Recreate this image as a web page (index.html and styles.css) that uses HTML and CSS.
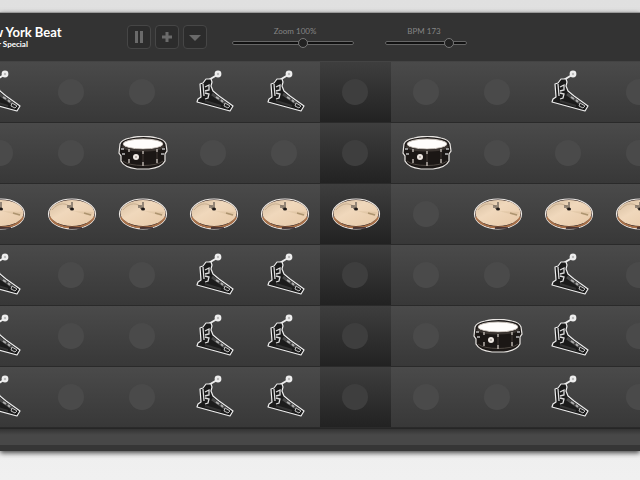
FILE: index.html
```
<!DOCTYPE html>
<html lang="en">
<head>
    <meta charset="UTF-8">
    <title>New York Beat</title>
    <link rel="stylesheet" href="styles.css">
</head>

<body>

<svg class="sprites" aria-hidden="true">
    <symbol id="kick" viewBox="-1 1 48 52">
        <path d="M16 16 L26 10" stroke="#eee" stroke-width="2" fill="none"/>
        <path d="M9 19 L12 18 L15 14 L20 14 L21 17 L20 21 L22 26 L28 31 L42 41 L39 46 L6 37 L7 34 L10 32 Z" fill="#1b1b1b" stroke="#eee" stroke-width="1.2" stroke-linejoin="round"/>
        <path d="M12 19 L13 31 M14 22 L18 20 L18 25 L14 26 M14 28 L18 29 L17 33 L14 34" stroke="#ddd" stroke-width="1.3" fill="none"/>
        <path d="M21 29 L38 41" stroke="#484848" stroke-width="3"/>
        <path d="M25 32 L28 34 M30 35 L32 37" stroke="#aaa" stroke-width="2"/>
        <path d="M34 38 L39 41 L37 43 L33 41 Z" fill="#222" stroke="#bbb" stroke-width="1"/>
        <path d="M14 36 L30 41" stroke="#333" stroke-width="2"/>
        <circle cx="27" cy="9" r="3.4" fill="#eee"/>
        <circle cx="27" cy="9" r="1.2" fill="#bbb"/>
    </symbol>

    <symbol id="snare" viewBox="0 0 50 34">
        <path d="M2 8 C3 5 7 3 12 2 C20 0 31 0 39 2 C44 3 47 5 48 8 L49 15 L47 18 L47 25 C45 29 39 32 31 33 H19 C11 32 5 29 3 25 L3 20 L1 17 Z" fill="#1b1715" stroke="#e8e5e2" stroke-width="1.2"/>
        <ellipse cx="25" cy="8" rx="20" ry="5" fill="#fffdfb" stroke="#c9c1ba"/>
        <path d="M4 10 C9 16 41 16 46 10" stroke="#3a3430" stroke-width="2" fill="none"/>
        <path d="M5 25 C11 31 39 31 45 25" stroke="#4f4842" stroke-width="1" fill="none"/>
        <path d="M11 13 V16 M11 23 V27 M25 15 V18 M25 26 V30 M39 13 V16 M39 23 V27" stroke="#b5aea8" stroke-width="1.5"/>
        <path d="M25 18 V26 M39 16 V23" stroke="#403934" stroke-width="1"/>
        <path d="M3 13 h3 M4 18 h3 M44 13 h3 M43 18 h3" stroke="#bbb" stroke-width="1.3"/>
        <circle cx="18" cy="21" r="3" fill="#eee8e3"/>
        <circle cx="18" cy="21" r="1" fill="#aaa29b"/>
    </symbol>

    <symbol id="hihat" viewBox="0 0 50 34">
        <linearGradient id="brass" x1="0" y1="0" x2="1" y2="1">
            <stop offset="0" stop-color="#d5bd9f"/>
            <stop offset="0.4" stop-color="#f0d8bc"/>
            <stop offset="1" stop-color="#e7c9a7"/>
        </linearGradient>
        <ellipse cx="25" cy="17" rx="23.5" ry="15" fill="#2a1c1c" stroke="#eeeae6" stroke-width="1.2"/>
        <path d="M3 20 C9 34 41 34 47 20" fill="none" stroke="#a87048" stroke-width="2"/>
        <path d="M22 31 H35" stroke="#312328" stroke-width="1.5"/>
        <ellipse cx="25" cy="16" rx="22.5" ry="13" fill="url(#brass)"/>
        <path d="M5 13 C11 5 20 5 25 12" fill="none" stroke="#c7ae90" stroke-width="1"/>
        <path d="M26 14 L46 15 L44 19 Z" fill="#cbb08b" opacity="0.3"/>
        <path d="M37 16 L44 18" stroke="#ad946f" stroke-width="1.5"/>
        <path d="M25 5 V12 M21 8 V11 M23 8 V12" stroke="#5b534c" stroke-width="1.2"/>
        <ellipse cx="25" cy="12" rx="2" ry="1.5" fill="#1d1817"/>
    </symbol>
</svg>

<div class="sequencer">
    <header class="toolbar">
        <div class="song">
            <h1>New York Beat</h1>
            <p>Winter Special</p>
        </div>

        <div class="buttons">
            <button type="button" aria-label="Pause">
                <svg width="12" height="12" viewBox="0 0 12 12"><path d="M2 0h3v12h-3z M7 0h3v12h-3z"/></svg>
            </button>
            <button type="button" aria-label="Add">
                <svg width="12" height="12" viewBox="0 0 12 12"><path d="M4.500 1h3v3.500h3.500v3h-3.500v3.500h-3v-3.500h-3.500v-3h3.500z"/></svg>
            </button>
            <button type="button" aria-label="More">
                <svg width="12" height="12" viewBox="0 0 12 12"><path d="M0 4h12l-6 6z"/></svg>
            </button>
        </div>

        <div class="slider zoom">
            <label for="zoom">Zoom 100%</label>
            <input type="range" id="zoom" min="0" max="170" value="100">
        </div>

        <div class="slider bpm">
            <label for="bpm">BPM 173</label>
            <input type="range" id="bpm" min="40" max="200" value="173">
        </div>
    </header>

    <main id="tracks"></main>

    <footer class="tray"></footer>
</div>

<script src="script.js"></script>
</body>
</html>
```
FILE: styles.css
```
body {
    margin: 0;
    min-height: 100vh;
    box-sizing: border-box;
    padding-top: 12px;
    background: linear-gradient(#e0e0e0, #f0f0f0);
    font-family: Lato, sans-serif;
    overflow-x: hidden;
}

.sprites {
    position: absolute;
    width: 0;
    height: 0;
}

.sequencer {
    border-top: 1px solid #999;
    box-shadow: 0 2px 5px #444;
}

/* toolbar */
.toolbar {
    display: flex;
    align-items: center;
    height: 48px;
    background: #333;
}

.song {
    width: 151px;
    margin-left: -24px;
    color: #fff;
    white-space: nowrap;
}

.song h1 {
    margin: 0;
    font-size: 13px;
    line-height: 13px;
}

.song p {
    margin: 0;
    font-size: 8px;
    line-height: 10px;
    font-weight: bold;
}

.buttons {
    display: flex;
    gap: 4px;
    margin-right: 25px;
}

.buttons button {
    display: flex;
    align-items: center;
    justify-content: center;
    width: 24px;
    height: 24px;
    padding: 0;
    background: #2c2c2c;
    border: 1px solid #464646;
    border-radius: 4px;
}

.buttons svg {
    fill: #6a6a6a;
}

.slider {
    display: flex;
    flex-direction: column;
    gap: 2px;
    width: 122px;
    margin-right: 31px;
}

.slider.bpm {
    width: 82px;
}

.slider label {
    align-self: center;
    padding-left: 4px;
    color: #858585;
    font-size: 8px;
    line-height: 10px;
}

.slider.bpm label {
    padding: 0 4px 0 0;
}

.slider input {
    appearance: none;
    width: 100%;
    height: 10px;
    margin: 0;
    background: none;
}

.slider input::-webkit-slider-runnable-track {
    box-sizing: border-box;
    height: 4px;
    background: #111;
    border: 1px solid #666;
    border-radius: 2px;
}

.slider input::-webkit-slider-thumb {
    appearance: none;
    box-sizing: border-box;
    width: 10px;
    height: 10px;
    margin-top: -4px;
    background: #222;
    border: 1px solid #777;
    border-radius: 50%;
}

/* tracks */
#tracks {
    border-top: 1px solid #444;
}

.track {
    display: flex;
    justify-content: center;
    box-sizing: border-box;
    height: 61px;
    overflow: hidden;
    background: linear-gradient(#4a4a4a, #383838);
    border-bottom: 1px solid #2a2a2a;
}

.step {
    display: flex;
    flex: none;
    align-items: center;
    justify-content: center;
    box-sizing: border-box;
    width: 71px;
    padding: 0;
    background: none;
    border: 0;
}

.step.current {
    background: linear-gradient(#3e3e3e, #222);
}

.dot {
    width: 26px;
    height: 26px;
    margin-right: 2px;
    border-radius: 50%;
    background: #4a4a4a;
}

.current .dot {
    background: #3e3e3e;
}

.kick {
    width: 48px;
    height: 52px;
}

.snare,
.hihat {
    width: 50px;
    height: 34px;
}

.tray {
    height: 16px;
    background: linear-gradient(#333, #484848 6px);
    border-top: 1px solid #262626;
    border-bottom: 6px solid #363636;
}
```
FILE: script.js
```
// k = kick, s = snare, h = hi-hat, . = empty step
const pattern = [
    'k..kk...k.',
    '..s...s...',
    'hhhhhh.hhh',
    'k..kk...k.',
    'k..kk..sk.',
    'k..kk...k.'
];
const drums = { k: 'kick', s: 'snare', h: 'hihat' };
const currentStep = 5;

document.getElementById('tracks').innerHTML = pattern.map((row, r) => {
    const steps = [...row].map((key, i) => {
        const drum = drums[key];
        const icon = drum
            ? `<svg class="${drum}"><use href="#${drum}"/></svg>`
            : '<span class="dot"></span>';
        const cls = i === currentStep ? 'step current' : 'step';
        return `<button type="button" class="${cls}" aria-label="Track ${r + 1} step ${i + 1}">${icon}</button>`;
    });
    return `<div class="track">${steps.join('')}</div>`;
}).join('');
```
